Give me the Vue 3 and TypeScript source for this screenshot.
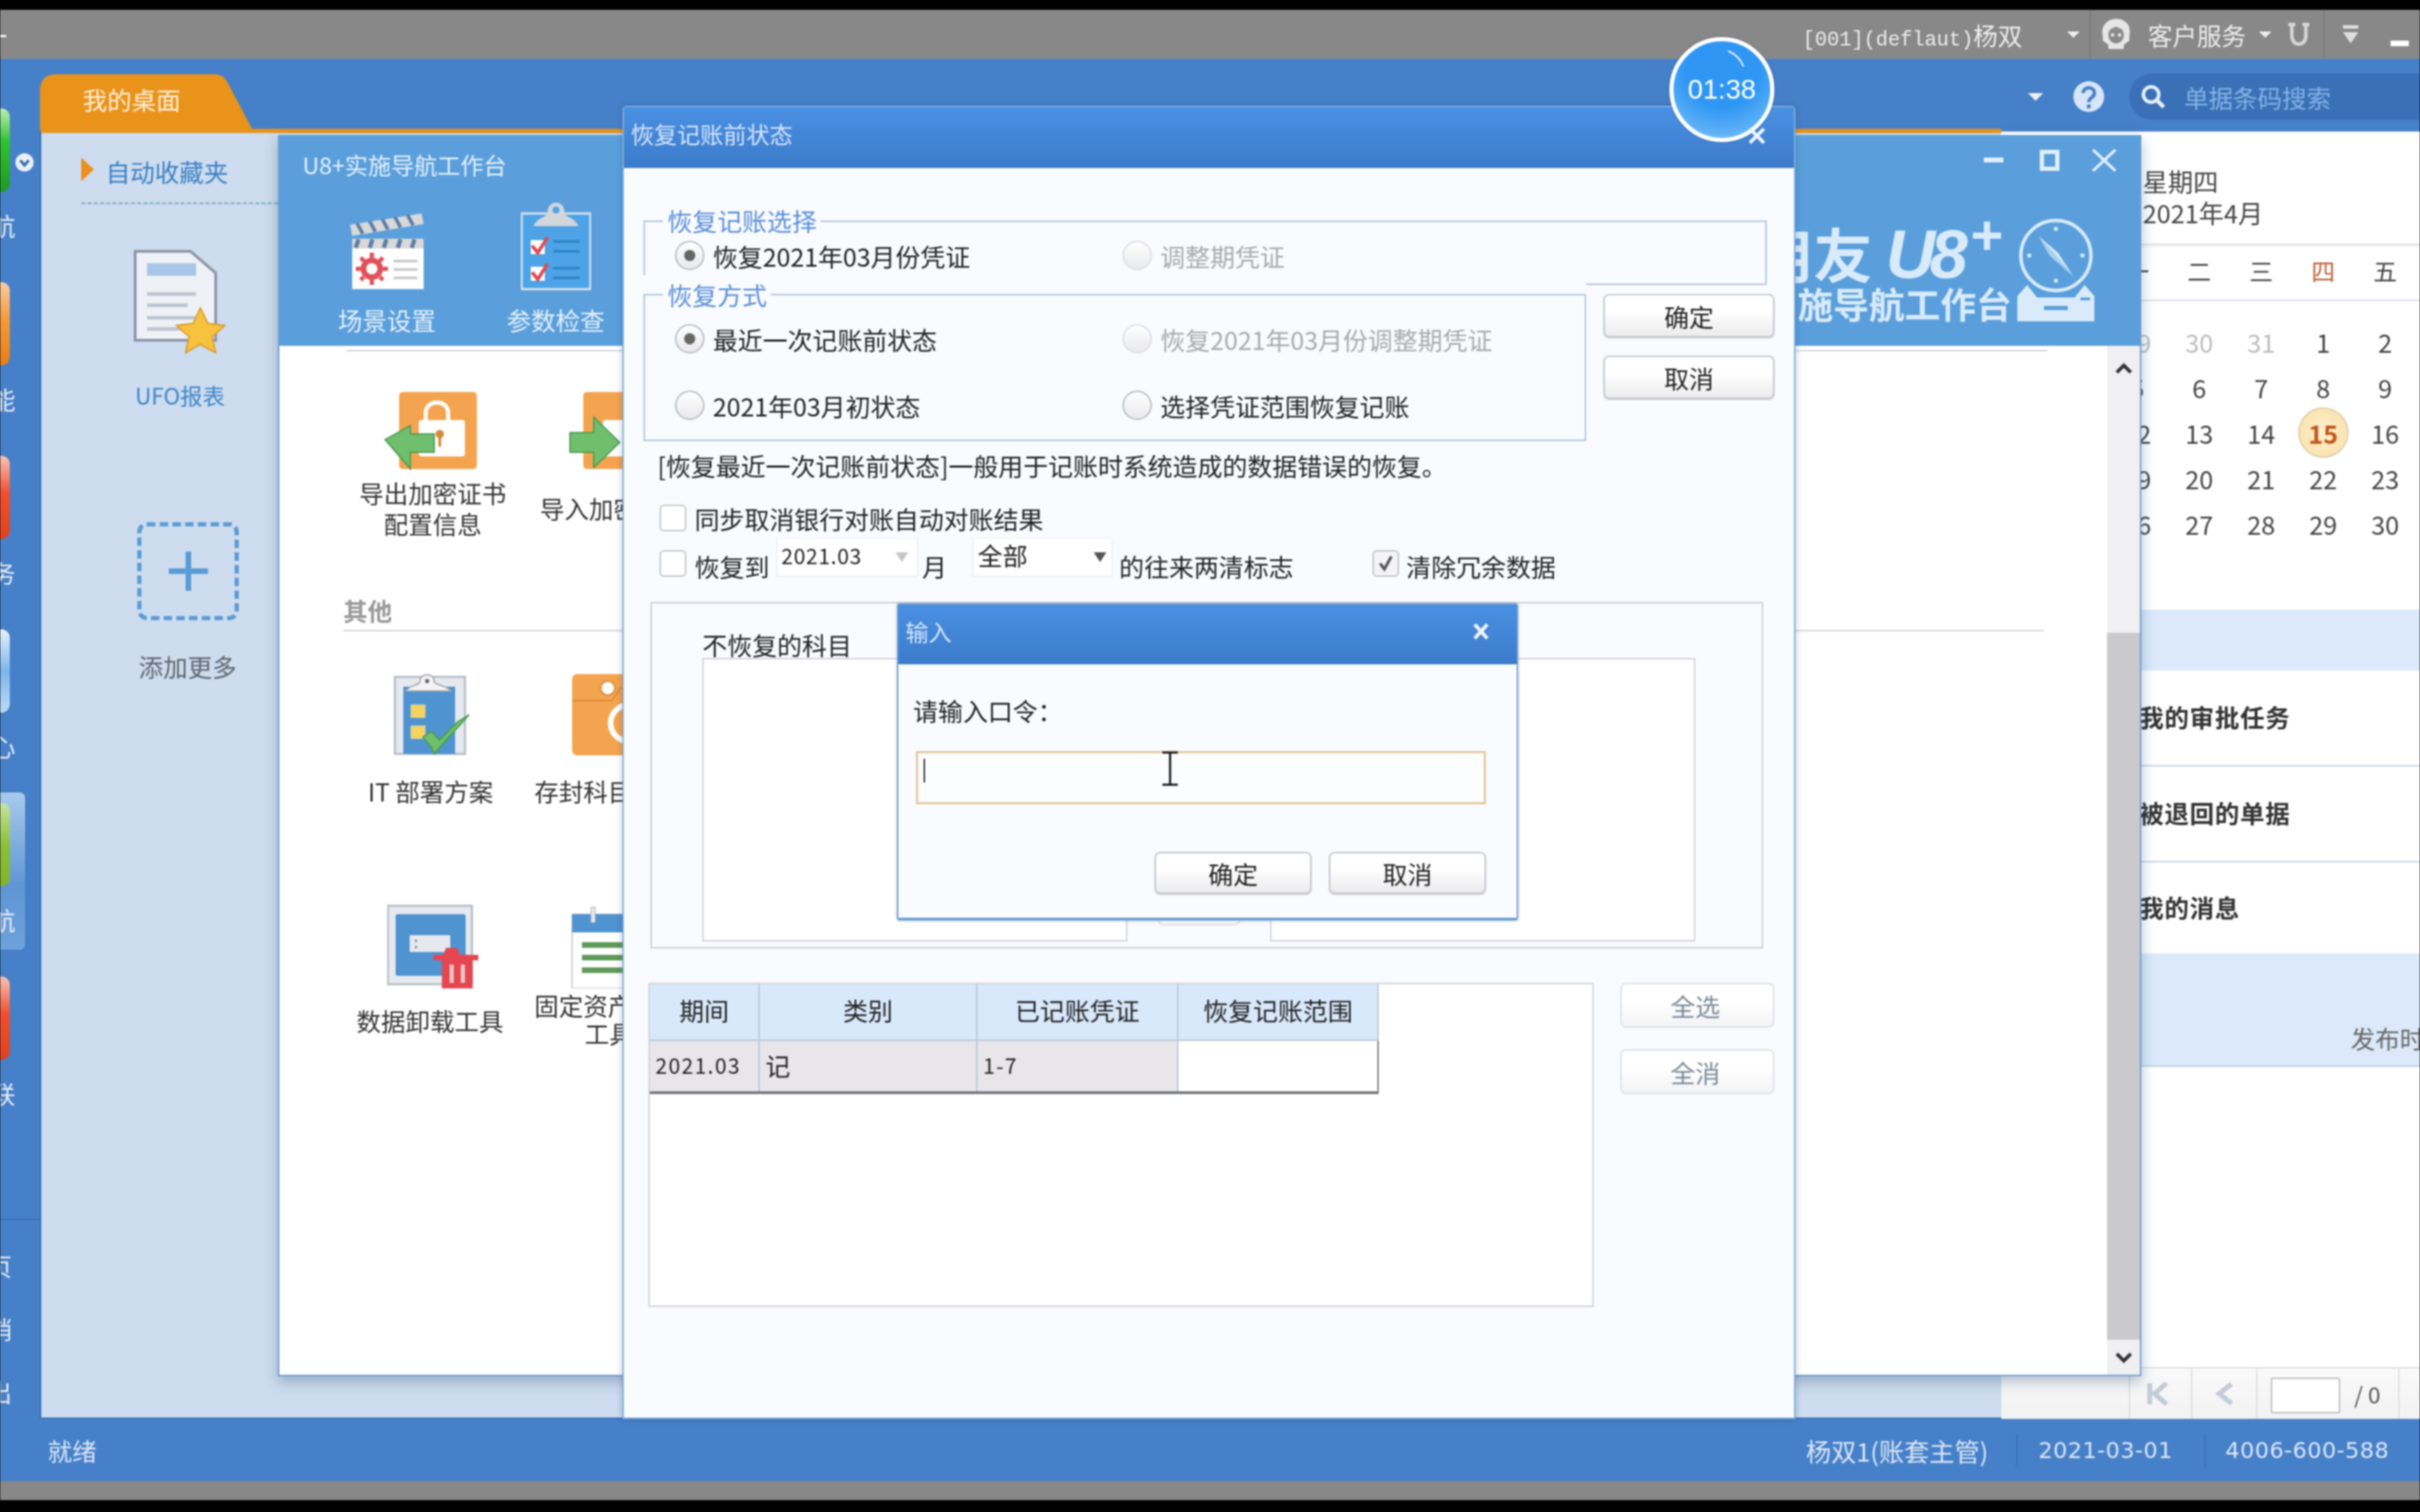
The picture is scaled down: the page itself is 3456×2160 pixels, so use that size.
<script setup lang="ts">
const sideItems = [
  { label: '航', cls: 'green' },
  { label: '能', cls: 'orange' },
  { label: '务', cls: 'red' },
  { label: '心', cls: 'blue' },
  { label: '航', cls: 'lime', active: true },
  { label: '联', cls: 'red' }
]
const sideBottom = ['页', '销', '出']
const weekdays = ['一', '二', '三', '四', '五', '六', '日']
const days: { t: string; muted?: boolean; today?: boolean }[] = [
  { t: '29', muted: true }, { t: '30', muted: true }, { t: '31', muted: true }, { t: '1' }, { t: '2' }, { t: '3' }, { t: '4' },
  { t: '5' }, { t: '6' }, { t: '7' }, { t: '8' }, { t: '9' }, { t: '10' }, { t: '11' },
  { t: '12' }, { t: '13' }, { t: '14' }, { t: '15', today: true }, { t: '16' }, { t: '17' }, { t: '18' },
  { t: '19' }, { t: '20' }, { t: '21' }, { t: '22' }, { t: '23' }, { t: '24' }, { t: '25' },
  { t: '26' }, { t: '27' }, { t: '28' }, { t: '29' }, { t: '30' }, { t: '1' }, { t: '2' }
]
</script>

<template>
  <div class="page">
    <div class="black-top"></div>
    <header class="topbar">
      <span class="plus">+</span>
      <span class="account">[001](deflaut)<b>杨双</b></span>
      <i class="tri tri-a"></i>
      <i class="vsep sep-a"></i>
      <svg class="avatar" width="50" height="46" viewBox="0 0 50 46">
        <path d="M6 26 C2 6 18 1 25 1 C34 1 48 6 44 26 L44 32 L36 38 L36 44 L14 44 L14 38 L6 32 Z" fill="#e6e6e6" />
        <path d="M14 24 C14 14 22 14 25 12 C30 15 36 14 36 24 C36 32 30 36 25 36 C20 36 14 32 14 24 Z" fill="#8a8a8a" />
        <circle cx="20" cy="24" r="2.4" fill="#eee" /><circle cx="30" cy="24" r="2.4" fill="#eee" />
      </svg>
      <span class="service">客户服务</span>
      <i class="tri tri-b"></i>
      <svg class="u-mark" width="38" height="36" viewBox="0 0 38 36"><path d="M4 4 H14 M24 4 H34 M9 4 V20 C9 36 29 36 29 20 V4" fill="none" stroke="#d6d6d6" stroke-width="5" /></svg>
      <i class="vsep sep-b"></i>
      <svg class="down-mark" width="24" height="30" viewBox="0 0 24 30"><path d="M1 2 H23 V7 H1 Z M1 12 H23 L12 28 Z" fill="#dedede" /></svg>
      <svg class="min-mark" width="26" height="8" viewBox="0 0 26 8"><rect width="26" height="8" fill="#fff" /></svg>
    </header>

    <div class="workspace">
      <aside class="sidebar">
        <div v-for="(it, i) in sideItems" :key="i" class="side-item" :class="{ active: it.active }">
          <div class="gloss" :class="it.cls"></div>
          <div class="side-label"><span>{{ it.label }}</span></div>
        </div>
        <div class="side-bottom">
          <div v-for="b in sideBottom" :key="b" class="side-link"><span>{{ b }}</span></div>
        </div>
        <svg class="side-chevron" width="28" height="28" viewBox="0 0 28 28">
          <circle cx="14" cy="14" r="13" fill="#e8f0fa" />
          <path d="M8 11 L14 18 L20 11" fill="none" stroke="#3b6ea8" stroke-width="4" />
        </svg>
      </aside>

      <div class="desk">
        <div class="tabbar">
          <div class="tab">我的桌面</div>
          <div class="tab-tools">
            <i class="tri tri-c"></i>
            <svg class="help" width="46" height="46" viewBox="0 0 46 46">
              <circle cx="23" cy="23" r="22" fill="#d6e6f8" />
              <path d="M15 18 C15 8 31 8 31 18 C31 25 23 24 23 31" fill="none" stroke="#4a82c4" stroke-width="5" />
              <circle cx="23" cy="37" r="3" fill="#4a82c4" />
            </svg>
            <div class="search">
              <svg width="40" height="40" viewBox="0 0 40 40">
                <circle cx="17" cy="17" r="11" fill="none" stroke="#e6f0fb" stroke-width="5" />
                <path d="M25 25 L35 35" stroke="#e6f0fb" stroke-width="6" />
              </svg>
              <span>单据条码搜索</span>
            </div>
          </div>
        </div>

        <div class="desk-body">
          <section class="fav">
            <div class="fav-head">
              <svg width="18" height="34" viewBox="0 0 18 34"><path d="M0 0 L18 17 L0 34 Z" fill="#ee8f1c" /></svg>
              <span>自动收藏夹</span>
            </div>
            <div class="fav-rule"></div>
            <svg class="ufo-icon" width="132" height="150" viewBox="0 0 132 150">
              <path d="M3 3 H82 L118 34 V130 H3 Z" fill="#eef1f6" stroke="#8e96a8" stroke-width="4" />
              <rect x="20" y="20" width="70" height="18" fill="#a8c6e8" />
              <path d="M20 64 H90 M20 80 H78 M20 98 H90 M20 114 H70" stroke="#bcc3cf" stroke-width="5" />
              <path d="M96 84 L107 106 L131 109 L113 125 L118 148 L96 136 L75 148 L80 125 L62 109 L86 106 Z" fill="#f7c33f" stroke="#d99a2a" stroke-width="2" />
            </svg>
            <div class="ufo-label">UFO报表</div>
            <div class="add-box">
              <svg width="62" height="62" viewBox="0 0 62 62"><path d="M31 3 V59 M3 31 H59" stroke="#5b9bd5" stroke-width="8" /></svg>
            </div>
            <div class="add-label">添加更多</div>
          </section>

          <section class="right-panel">
            <div class="cal-head">
              <div>星期四</div>
              <div>2021年4月</div>
            </div>
            <div class="week-row">
              <span v-for="w in weekdays" :key="w" :class="{ thu: w === '四' }">{{ w }}</span>
            </div>
            <div class="date-grid">
              <span v-for="(d, i) in days" :key="i" :class="{ muted: d.muted, today: d.today }">{{ d.t }}</span>
            </div>
            <div class="band band-a"></div>
            <div class="msg-row line">我的审批任务</div>
            <div class="msg-row line">被退回的单据</div>
            <div class="msg-row msg-last">我的消息</div>
            <div class="band band-b"><span>发布时间</span></div>
            <div class="pager">
              <div class="pg-cell pg-first">
                <svg width="40" height="34" viewBox="0 0 40 34"><path d="M4 2 V32 M28 2 L11 17 L28 32" fill="none" stroke="#c3ccd8" stroke-width="7" /></svg>
              </div>
              <div class="pg-cell pg-prev">
                <svg width="28" height="34" viewBox="0 0 28 34"><path d="M24 3 L6 17 L24 31" fill="none" stroke="#c3ccd8" stroke-width="7" /></svg>
              </div>
              <div class="pg-cell pg-input"><i></i><span>/ 0</span></div>
              <div class="pg-cell pg-end"></div>
            </div>
          </section>
        </div>
      </div>
    </div>

    <footer class="status">
      <span class="ready">就绪</span>
      <span class="st st-user">杨双1(账套主管)</span><i class="st-sep"></i>
      <span class="st st-date">2021-03-01</span><i class="st-sep"></i>
      <span class="st st-tel">4006-600-588</span>
    </footer>
    <div class="gray-bottom"></div>
    <div class="black-bottom"></div>

    <!-- U8+ window -->
    <div class="u8win">
      <div class="u8-head">
        <div class="u8-head-left">
          <div class="u8-title">U8+实施导航工作台</div>
          <div class="u8-tools">
            <div class="u8-tool">
              <div class="u8-tool-icon">
                <svg width="106" height="110" viewBox="0 0 106 110">
                  <path d="M0 16 L102 0 L105 15 L3 32 Z" fill="#d9d9d9" />
                  <path d="M10 14 L18 29 M28 11 L36 26 M46 8 L54 23 M64 5 L72 20 M82 2 L90 17" stroke="#5c7fa8" stroke-width="5" />
                  <rect x="3" y="36" width="102" height="14" fill="#d9d9d9" />
                  <path d="M12 37 L8 49 M32 37 L28 49 M52 37 L48 49 M72 37 L68 49 M92 37 L88 49" stroke="#5c7fa8" stroke-width="6" />
                  <rect x="3" y="50" width="102" height="58" fill="#fff" />
                  <circle cx="31" cy="79" r="12" fill="none" stroke="#e0505a" stroke-width="8" />
                  <path d="M31 56 V102 M8 79 H54 M15 63 L47 95 M47 63 L15 95" stroke="#e0505a" stroke-width="6" stroke-dasharray="7 32" stroke-dashoffset="0" />
                  <path d="M62 68 H96 M62 80 H96 M62 92 H96" stroke="#ccc" stroke-width="4" />
                </svg>
              </div>
              <div class="u8-tool-label">场景设置</div>
            </div>
            <div class="u8-tool">
              <div class="u8-tool-icon">
                <svg width="100" height="128" viewBox="0 0 100 128">
                  <rect x="1" y="18" width="98" height="108" fill="#4da3e6" stroke="#dfe7ee" stroke-width="3" />
                  <path d="M18 36 C24 22 38 24 38 16 C38 -2 62 -2 62 16 C62 24 76 22 82 36 Z" fill="#d3d6da" />
                  <circle cx="50" cy="13" r="5" fill="#4da3e6" />
                  <rect x="14" y="56" width="20" height="20" fill="#fff" /><rect x="14" y="94" width="20" height="20" fill="#fff" />
                  <path d="M16 64 L24 74 L38 52 M16 102 L24 112 L38 90" fill="none" stroke="#e04a50" stroke-width="5" />
                  <path d="M46 58 H84 M46 72 H84 M46 96 H84 M46 110 H84" stroke="#2f86c8" stroke-width="4" />
                </svg>
              </div>
              <div class="u8-tool-label">参数检查</div>
            </div>
          </div>
        </div>
        <div class="u8-head-right">
          <div class="win-ctrls">
            <svg width="28" height="8" viewBox="0 0 28 8" class="c-min"><rect width="28" height="7" fill="#e2effb" /></svg>
            <svg width="28" height="30" viewBox="0 0 28 30" class="c-max"><rect x="3" y="3" width="22" height="24" fill="none" stroke="#e2effb" stroke-width="6" /></svg>
            <svg width="36" height="34" viewBox="0 0 36 34" class="c-close"><path d="M2 2 L34 32 M34 2 L2 32" stroke="#e2effb" stroke-width="4" /></svg>
          </div>
          <div class="brand">
            <div class="brand-text">
              <div class="brand-line1">用友 <b>U8</b><sup>+</sup></div>
              <div class="brand-line2">实施导航工作台</div>
            </div>
            <svg width="116" height="160" viewBox="0 0 116 160">
              <circle cx="57" cy="64" r="50" fill="none" stroke="#d9ebfb" stroke-width="5" />
              <circle cx="57" cy="26" r="3" fill="#d9ebfb" /><circle cx="57" cy="100" r="3" fill="#d9ebfb" />
              <circle cx="19" cy="64" r="3" fill="#d9ebfb" /><circle cx="95" cy="64" r="3" fill="#d9ebfb" />
              <path d="M32 36 L52 58 L62 70 L82 94 L60 60 Z" fill="#d9ebfb" />
              <path d="M32 36 L48 64 L82 94 L52 58 Z" fill="#a9d0f0" />
              <path d="M2 158 V122 L16 106 L30 124 H84 L98 106 L112 122 V158 Z" fill="#d9ebfb" />
              <rect x="40" y="136" width="34" height="6" fill="#5a9fdc" />
              <rect x="92" y="124" width="14" height="4" fill="#5a9fdc" />
            </svg>
          </div>
        </div>
      </div>
      <div class="u8-body">
        <div class="u8-main">
          <div class="rule rule-top"></div>
          <div class="tool-row row-1">
            <div class="tool">
              <svg width="140" height="120" viewBox="0 0 140 120">
                <rect x="22" y="4" width="111" height="110" rx="5" fill="#f4a34e" />
                <path d="M60 46 V34 C60 14 92 14 92 34 V46" fill="none" stroke="#fff" stroke-width="6" />
                <rect x="50" y="44" width="66" height="52" rx="4" fill="#fff" />
                <circle cx="80" cy="64" r="6" fill="#d98a36" /><rect x="78" y="64" width="4" height="18" fill="#d98a36" />
                <path d="M2 72 L38 52 V64 L72 64 V90 L38 90 V114 Z" fill="#6fbf6f" stroke="#4c9a50" stroke-width="2" />
              </svg>
              <div class="tool-label">导出加密证书<br />配置信息</div>
            </div>
            <div class="tool tool-cut">
              <svg width="140" height="120" viewBox="0 0 140 120" class="cut-icon">
                <rect x="20" y="4" width="111" height="110" rx="5" fill="#f4a34e" />
                <rect x="48" y="44" width="66" height="52" rx="4" fill="#fff" />
                <path d="M1 62 L35 62 L35 40 L72 76 L35 112 L35 90 L1 90 Z" fill="#6fbf6f" stroke="#4c9a50" stroke-width="2" />
              </svg>
              <div class="tool-label single">导入加密证书</div>
            </div>
          </div>
          <div class="section-title">其他</div>
          <div class="tool-row row-2">
            <div class="tool">
              <svg class="it-icon" width="120" height="120" viewBox="0 0 120 120">
                <rect x="10" y="6" width="100" height="110" fill="#e6e9ef" stroke="#b7bcc6" stroke-width="3" />
                <rect x="22" y="20" width="74" height="96" fill="#4f93d1" />
                <path d="M26 26 C30 18 46 18 46 12 C46 0 66 0 66 12 C66 18 84 18 90 26 Z" fill="#f4f4f4" stroke="#aaa" stroke-width="2" />
                <circle cx="56" cy="12" r="3" fill="#666" />
                <rect x="33" y="46" width="20" height="18" fill="#f6d35a" stroke="#ddb" stroke-width="1" />
                <rect x="33" y="76" width="20" height="18" fill="#f6d35a" stroke="#ddb" stroke-width="1" />
                <path d="M50 92 L62 106 L66 116 L76 104 L116 60 L100 70 L74 96 L62 84 Z" fill="#6fc06a" stroke="#4f9c50" stroke-width="2" />
              </svg>
              <div class="tool-label one it-label">IT 部署方案</div>
            </div>
            <div class="tool tool-cut">
              <svg width="130" height="120" viewBox="0 0 130 120" class="cut-icon">
                <rect x="11" y="2" width="115" height="116" rx="7" fill="#f4a34e" />
                <path d="M11 40 H68 L80 22 H126" fill="none" stroke="#d98a36" stroke-width="2" />
                <circle cx="62" cy="22" r="10" fill="#fff" stroke="#d98a36" stroke-width="2" />
                <circle cx="92" cy="72" r="26" fill="none" stroke="#fff" stroke-width="8" />
              </svg>
              <div class="tool-label one cut-label">存封科目</div>
            </div>
          </div>
          <div class="tool-row row-3">
            <div class="tool">
              <svg width="130" height="120" viewBox="0 0 130 120">
                <rect x="1" y="2" width="120" height="112" fill="#e6e9ef" stroke="#b7bcc6" stroke-width="3" />
                <rect x="12" y="14" width="100" height="88" rx="3" fill="#4f93d1" />
                <rect x="32" y="44" width="58" height="24" fill="#e6e9ef" />
                <circle cx="41" cy="52" r="2" fill="#999" /><circle cx="41" cy="61" r="2" fill="#999" />
                <path d="M66 72 H80 L84 62 H100 L104 72 H130 V80 H122 V120 H78 V80 H66 Z" fill="#e44750" />
                <path d="M92 86 V112 M108 86 V112" stroke="#f3c3c6" stroke-width="6" />
              </svg>
              <div class="tool-label row3-label">数据卸载工具</div>
            </div>
            <div class="tool tool-cut">
              <svg width="130" height="120" viewBox="0 0 130 120" class="cut-icon">
                <rect x="11" y="14" width="116" height="106" fill="#fff" stroke="#c8ccd2" stroke-width="2" />
                <rect x="11" y="14" width="116" height="26" fill="#4f93d1" />
                <rect x="38" y="4" width="6" height="22" fill="#e6e9ef" stroke="#aaa" stroke-width="1" />
                <path d="M25 58 H127 M25 76 H127 M25 94 H127" stroke="#5f9a5a" stroke-width="8" />
              </svg>
              <div class="tool-label two-cut">固定资产<br /><em>工具</em></div>
            </div>
          </div>
        </div>
        <div class="u8-scroll">
          <svg class="sb-up" width="24" height="16" viewBox="0 0 24 16"><path d="M2 14 L12 4 L22 14" fill="none" stroke="#333" stroke-width="5" /></svg>
          <div class="sb-thumb"></div>
          <svg class="sb-down" width="24" height="16" viewBox="0 0 24 16"><path d="M2 2 L12 12 L22 2" fill="none" stroke="#333" stroke-width="5" /></svg>
        </div>
      </div>
    </div>

    <!-- main dialog -->
    <div class="dialog">
      <div class="dlg-title">恢复记账前状态</div>
      <div class="dlg-body">
        <div class="group group-a">
          <span class="legend">恢复记账选择</span>
          <div class="radio-grid">
            <label class="radio on"><i></i>恢复2021年03月份凭证</label>
            <label class="radio off"><i></i>调整期凭证</label>
          </div>
        </div>
        <div class="row-method">
          <div class="method-wrap">
            <div class="group group-b">
              <span class="legend">恢复方式</span>
              <div class="radio-grid two">
                <label class="radio on"><i></i>最近一次记账前状态</label>
                <label class="radio off"><i></i>恢复2021年03月份调整期凭证</label>
                <label class="radio"><i></i>2021年03月初状态</label>
                <label class="radio"><i></i>选择凭证范围恢复记账</label>
              </div>
            </div>
          </div>
          <div class="side-btns">
            <button class="btn">确定</button>
            <button class="btn">取消</button>
          </div>
        </div>
        <p class="desc">[恢复最近一次记账前状态]一般用于记账时系统造成的数据错误的恢复。</p>
        <div class="check-line first"><i class="cb"></i><span>同步取消银行对账自动对账结果</span></div>
        <div class="check-line second">
          <i class="cb"></i><span>恢复到</span>
          <div class="field f-month">2021.03<i class="mini-tri pale"></i></div>
          <span class="m-label">月</span>
          <div class="field f-all">全部<i class="mini-tri"></i></div>
          <span class="after-all">的往来两清标志</span>
          <i class="cb checked">
            <svg width="24" height="26" viewBox="0 0 24 26"><path d="M4 13 L10 21 L20 3" fill="none" stroke="#555" stroke-width="4" /></svg>
          </i>
          <span class="clean">清除冗余数据</span>
        </div>
        <div class="subject-box">
          <div class="subject-label">不恢复的科目</div>
          <div class="subject-lists">
            <div class="list"></div>
            <div class="mid-btn-col"><div class="mid-btn"></div></div>
            <div class="list"></div>
          </div>
        </div>
        <div class="table-row">
          <div class="table-box">
            <table>
              <thead>
                <tr><th class="c1">期间</th><th class="c2">类别</th><th class="c3">已记账凭证</th><th class="c4">恢复记账范围</th></tr>
              </thead>
              <tbody>
                <tr><td class="num">2021.03</td><td>记</td><td class="num">1-7</td><td class="blank"></td></tr>
              </tbody>
            </table>
          </div>
          <div class="table-btns">
            <button class="btn dim">全选</button>
            <button class="btn dim">全消</button>
          </div>
        </div>
      </div>
    </div>

    <!-- password dialog -->
    <div class="pwd">
      <div class="pwd-title">
        <span>输入</span>
        <svg width="24" height="26" viewBox="0 0 24 26"><path d="M3 3 L21 23 M21 3 L3 23" stroke="#eef5fd" stroke-width="5" /></svg>
      </div>
      <div class="pwd-body">
        <div class="pwd-label">请输入口令：</div>
        <div class="pwd-input">
          <i class="caret"></i>
          <svg class="ibeam" width="28" height="50" viewBox="0 0 28 50"><path d="M3 2 H25 M14 2 V48 M3 48 H25" fill="none" stroke="#111" stroke-width="3" /></svg>
        </div>
        <div class="pwd-btns">
          <button class="btn">确定</button>
          <button class="btn">取消</button>
        </div>
      </div>
    </div>

    <!-- recording timer -->
    <div class="timer">
      <svg width="40" height="40" viewBox="0 0 40 40"><path d="M4 4 C14 8 22 16 26 26" fill="none" stroke="#fff" stroke-width="2" /></svg>
      <span>01:38</span>
    </div>
    <svg class="dlg-x" width="28" height="28" viewBox="0 0 28 28"><path d="M4 4 L24 24 M24 4 L4 24" stroke="#eef5fd" stroke-width="5" /></svg>
  </div>
</template>

<style>
html, body { margin: 0; background: #000; overflow: hidden; }
</style>

<style scoped>
* { box-sizing: border-box; }
.page {
  position: relative; width: 3456px; height: 2160px; overflow: hidden; display: flex; flex-direction: column;
  background: #000; color: #222; font-family: "Noto Sans CJK SC", "Liberation Sans", sans-serif; font-size: 35px;
  filter: blur(1px);
}
.black-top { height: 14px; background: #000; flex: none; }
.topbar { height: 70px; flex: none; background: #888; display: flex; align-items: center; color: #eee; position: relative; }
.plus { margin-left: -14px; font-size: 44px; line-height: 1; color: #fff; }
.account { margin-left: 2564px; font-family: "Liberation Mono", "Noto Sans CJK SC", monospace; font-size: 29px; width: 378px; white-space: nowrap; flex: none; }
.account b { font-family: "Noto Sans CJK SC", sans-serif; font-size: 35px; font-weight: 400; }
.tri { display: block; width: 0; height: 0; border-left: 9px solid transparent; border-right: 9px solid transparent; border-top: 9px solid #eee; flex: none; }
.vsep { display: block; width: 2px; height: 70px; background: #7a7a7a; flex: none; }
.sep-a { margin-left: 14px; }
.avatar { margin-left: 11px; flex: none; }
.service { margin-left: 20px; width: 142px; white-space: nowrap; flex: none; }
.tri-b { margin-left: 17px; }
.u-mark { margin-left: 20px; flex: none; }
.sep-b { margin-left: 16px; }
.down-mark { margin-left: 25px; flex: none; }
.min-mark { display: block; margin-left: 45px; margin-top: 26px; flex: none; }

.workspace { height: 1943px; flex: none; background: #4680c8; display: flex; }
.sidebar { width: 57px; flex: none; position: relative; padding-top: 56px; overflow: hidden; }
.side-item { width: 36px; height: 225px; padding-top: 15px; margin-bottom: 23px; border-radius: 0 8px 8px 0; }
.side-item.active { background: linear-gradient(#a9cbec, #5f95d5 60%, #6ea2dc); box-shadow: 0 0 3px #3a6eb0; }
.gloss { width: 14px; height: 119px; border-radius: 0 12px 12px 0; }
.gloss.green { background: linear-gradient(#bfeeb8, #2fc034 40%, #1f9a25); }
.gloss.orange { background: linear-gradient(#f8cda6, #f39a3c 45%, #e67f18); }
.gloss.red { background: linear-gradient(#f9c4b8, #ef4f30 45%, #e0421f); }
.gloss.blue { background: linear-gradient(#e6f2fd, #7db6ec 50%, #bcdcf6); }
.gloss.lime { background: linear-gradient(#c8e4a0, #8cc03a 50%, #7eb52a); }
.side-label { margin-top: 28px; width: 22px; height: 40px; overflow: hidden; display: flex; justify-content: flex-end; color: #e6eef9; line-height: 40px; white-space: nowrap; }
.side-label span, .side-link span { flex: none; }
.side-bottom { margin-top: 136px; border-top: 2px solid #3a70b5; padding-top: 19px; }
.side-link { width: 17px; height: 90px; overflow: hidden; display: flex; justify-content: flex-end; align-items: center; color: #e6eef9; white-space: nowrap; }
.side-chevron { position: absolute; left: 21px; top: 134px; }

.desk { flex: 1; min-width: 0; display: flex; flex-direction: column; }
.tabbar { height: 100px; flex: none; display: flex; justify-content: space-between; align-items: flex-end; overflow: hidden; }
.tab { width: 303px; height: 78px; background: #e9931a; color: #fdf0dc; clip-path: path('M0 78 V24 Q0 0 24 0 H250 Q262 0 268 12 L303 78 Z'); padding-left: 61px; line-height: 72px; flex: none; }
.tab-tools { width: 630px; height: 100px; display: flex; align-items: center; padding-top: 8px; flex: none; }
.tri-c { border-left-width: 11px; border-right-width: 11px; border-top-width: 11px; margin-left: 70px; }
.help { margin-left: 42px; flex: none; }
.search { margin-left: 35px; width: 500px; height: 66px; flex: none; border-radius: 32px; background: #3a70b6; display: flex; align-items: center; padding-left: 14px; color: #82b3e6; gap: 24px; white-space: nowrap; }
.desk-body { flex: 1; min-height: 0; display: flex; }
.fav { width: 2801px; flex: none; background: #cddcee; border-top: 6px solid #e9931a; border-left: 2px solid #3a70b5; border-bottom: 2px solid #3a70b5; }
.fav-head { display: flex; align-items: center; gap: 17px; padding: 35px 0 0 57px; color: #3a80c4; }
.fav-head span { line-height: 40px; }
.fav-head svg { margin-top: -6px; }
.fav-rule { margin: 24px 0 0 57px; width: 281px; border-top: 3px dashed #8fb4d8; }
.ufo-icon { display: block; margin: 64px 0 0 131px; }
.ufo-label { margin: 36px 0 0 134px; font-size: 32px; color: #3e85c8; line-height: 44px; }
.add-box { margin: 160px 0 0 137px; width: 145px; height: 140px; border: 6px dashed #5b9bd5; border-radius: 14px; display: flex; align-items: center; justify-content: center; }
.add-label { margin: 44px 0 0 139px; color: #5e6670; line-height: 44px; }

.right-panel { width: 598px; flex: none; margin-top: 4px; background: #fff; display: flex; flex-direction: column; position: relative; }
.cal-head { padding: 48px 0 0 202px; height: 162px; font-size: 36px; line-height: 45px; color: #444; border-bottom: 2px solid #ddd; box-shadow: 0 2px 4px #eee; }
.week-row { display: grid; grid-template-columns: repeat(7, 88.5px); padding: 0 0 6px 150px; height: 80px; align-items: center; justify-items: center; border-bottom: 2px solid #d6dae2; width: 100%; white-space: nowrap; color: #444; font-size: 34px; }
.week-row .thu { color: #c2603a; }
.date-grid { display: grid; grid-template-columns: repeat(7, 88.5px); grid-auto-rows: 65px; padding: 25px 0 0 150px; align-items: center; justify-items: center; font-size: 36px; color: #444; height: 441px; flex: none; }
.date-grid span { width: 72px; height: 72px; line-height: 72px; text-align: center; border-radius: 50%; }
.date-grid .muted { color: #bdbdbd; }
.date-grid .today { background: radial-gradient(#fff2cf, #f8dda4); border: 2px solid #ddccaa; color: #c2561c; font-weight: 700; line-height: 68px; }
.band { background: #dbe9fb; flex: none; }
.band-a { height: 87px; }
.band-b { height: 162px; display: flex; align-items: flex-end; padding: 0 0 14px 499px; border-bottom: 2px solid #b9cfe6; color: #666; white-space: nowrap; }
.msg-row { padding: 0 0 4px 197px; font-weight: 700; letter-spacing: 1px; color: #333; display: flex; align-items: center; flex: none; }
.msg-row.line { height: 137px; border-bottom: 2px solid #c4d2e2; }
.msg-last { height: 130px; }
.pager { margin-top: auto; height: 74px; flex: none; border-top: 2px solid #ddd; background: linear-gradient(#fafafa, #f2f2f2); display: flex; padding-left: 182px; }
.pg-cell { border-left: 2px solid #ddd; display: flex; align-items: center; justify-content: center; flex: none; }
.pg-first { width: 89px; }
.pg-prev { width: 93px; }
.pg-input { width: 203px; justify-content: flex-start; padding-left: 19px; gap: 20px; color: #555; font-size: 32px; }
.pg-input i { display: block; width: 99px; height: 51px; margin-top: 5px; background: #fff; border: 2px solid #b8bcc2; border-radius: 3px; }
.pg-end { width: 31px; }

.status { height: 89px; flex: none; background: #4680c8; display: flex; align-items: center; padding-left: 68px; color: #dbe7f7; }
.ready { margin-right: auto; }
.st { font-family: "DejaVu Sans", "Noto Sans CJK SC", sans-serif; font-size: 32px; white-space: nowrap; letter-spacing: 0.6px; flex: none; }
.st-user { font-family: "Noto Sans CJK SC", sans-serif; font-size: 36px; width: 257px; letter-spacing: 0; }
.st-sep { display: block; width: 2px; height: 48px; background: #3c72b8; flex: none; }
.st-user + .st-sep { margin-left: 43px; }
.st-date { margin-left: 30px; width: 192px; }
.st-date + .st-sep { margin-left: 45px; }
.st-tel { margin: 0 41px 0 28px; width: 237px; }
.gray-bottom { height: 27px; flex: none; background: #888; }
.black-bottom { flex: 1; background: #000; }

.u8win { position: absolute; left: 397px; top: 193px; width: 2661px; height: 1773px; background: #fff; border: 2px solid #6d9bd0; border-top: 0; box-shadow: 0 8px 18px rgba(50, 80, 120, 0.35); display: flex; flex-direction: column; }
.u8-head { height: 301px; flex: none; background: #5a9fdc; color: #e6f1fb; display: flex; justify-content: space-between; }
.u8-title { padding: 20px 0 0 33px; height: 92px; font-size: 33px; line-height: 44px; }
.u8-tools { display: flex; padding-left: 33px; }
.u8-tool { width: 241px; display: flex; flex-direction: column; align-items: center; }
.u8-tool-icon { height: 130px; display: flex; align-items: flex-end; }
.u8-tool-label { margin-top: 20px; line-height: 44px; }
.u8-head-right { width: 820px; display: flex; flex-direction: column; align-items: flex-end; }
.win-ctrls { display: flex; align-items: center; height: 72px; padding-right: 33px; gap: 52px; }
.c-close { margin-left: -6px; }
.brand { display: flex; align-items: flex-end; padding-right: 61px; margin-top: 36px; color: #d9ebfb; }
.brand-text { text-align: right; margin-right: 6px; }
.brand-line1 { font-size: 84px; line-height: 84px; font-weight: 700; white-space: nowrap; padding-right: 12px; }
.brand-line1 b { font-family: "Liberation Sans", sans-serif; font-style: italic; font-size: 98px; letter-spacing: -8px; }
.brand-line1 sup { font-family: "Liberation Sans", sans-serif; font-size: 80px; line-height: 0; vertical-align: 34px; margin-left: 12px; }
.brand-line2 { font-size: 51px; line-height: 56px; font-weight: 700; white-space: nowrap; }
.u8-body { flex: 1; min-height: 0; display: flex; }
.u8-main { flex: 1; min-width: 0; padding-top: 6px; }
.rule { height: 2px; background: #d0d3da; margin-left: 96px; width: 2429px; }
.tool-row { display: grid; grid-template-columns: 240px 240px; margin-left: 99px; }
.tool { display: flex; flex-direction: column; align-items: center; color: #333; }
.tool svg { display: block; flex: none; }
.tool-cut { align-items: flex-start; padding-left: 25px; }
.tool-cut .cut-icon { margin-left: 43px; }
.row-1 .tool-cut .cut-icon { margin-left: 50px; }
.tool-label { text-align: center; line-height: 44px; white-space: nowrap; }
.row-1 { padding-top: 54px; }
.row-1 .tool-label { margin-top: 6px; }
.row-1 .single { margin-top: 28px; margin-left: 8px; }
.section-title { margin: 80px 0 0 91px; padding: 0 0 6px 0; line-height: 44px; font-weight: 700; color: #999; border-bottom: 2px solid #d0d3da; width: 2429px; }
.row-2 { padding-top: 59px; }
.row-2 .tool-label { margin-top: 27px; }
.it-icon { margin-left: -8px; }
.it-label { margin-left: -6px; }
.row-3 { padding-top: 140px; }
.row3-label { margin: 24px 0 0 -8px; }
.two-cut { margin-top: 4px; line-height: 40px; text-align: left; }
.two-cut em { font-style: normal; margin-left: 72px; }
.u8-scroll { width: 47px; flex: none; background: #f0eff1; display: flex; flex-direction: column; align-items: center; }
.sb-up { margin-top: 24px; margin-bottom: 370px; flex: none; }
.sb-thumb { width: 100%; height: 1010px; background: #cacacd; flex: none; }
.sb-down { margin-top: 18px; flex: none; }

.dialog { position: absolute; left: 889px; top: 151px; width: 1675px; height: 1876px; background: #fafbff; border: 2px solid #7fb0e0; border-radius: 6px 6px 0 0; box-shadow: 0 0 10px rgba(40, 70, 110, 0.35); font-size: 35.6px; }
.dlg-title { height: 87px; background: linear-gradient(#4a90e3, #3c7bca); color: #d6e6fa; font-size: 33px; line-height: 77px; padding-left: 10px; }
.dlg-body { padding: 75px 0 0 28px; }
.group { position: relative; border: 2px solid #a9c0dd; }
.group-a { width: 1604px; height: 92px; padding: 23px 0 0 43px; }
.legend { position: absolute; left: 26px; height: 44px; padding: 0 6px; line-height: 44px; background: #fafbff; color: #5b8fd8; white-space: nowrap; }
.group-a .legend { top: -24px; }
.group-b .legend { top: -23px; }
.radio-grid { display: grid; grid-template-columns: 639px 637px; }
.radio-grid.two { row-gap: 45px; }
.radio { display: flex; align-items: center; gap: 12px; height: 50px; white-space: nowrap; color: #222; }
.radio i { display: block; position: relative; width: 42px; height: 42px; border-radius: 50%; border: 2px solid #b5b8bd; background: linear-gradient(#fff, #e9e9ec); flex: none; }
.radio.on i::after { content: ''; position: absolute; left: 11px; top: 11px; width: 16px; height: 16px; border-radius: 50%; background: #666; }
.radio.off { color: #aaa; }
.radio.off i { border-color: #dcdde0; }
.row-method { display: flex; margin-top: -14px; position: relative; }
.method-wrap { width: 1346px; height: 237px; background: #fafbff; padding-top: 27px; flex: none; }
.group-b { height: 210px; padding: 37px 0 0 43px; }
.side-btns { margin: 27px 0 0 25px; display: flex; flex-direction: column; gap: 26px; }
.btn { display: block; font: inherit; color: #222; padding: 0; border: 2px solid #c4c6ca; border-radius: 8px; background: linear-gradient(#fff 40%, #ececee); box-shadow: 0 1px 2px #bbb; white-space: nowrap; }
.side-btns .btn { width: 244px; height: 62px; }
.desc { margin: 13px 0 0 20px; line-height: 44px; white-space: nowrap; }
.check-line { display: flex; align-items: center; margin-left: 23px; white-space: nowrap; }
.check-line.first { margin-top: 31px; height: 44px; }
.check-line.second { margin-top: 6px; height: 60px; }
.cb { display: block; width: 38px; height: 38px; border: 2px solid #c0c2c6; border-radius: 6px; background: #fff; margin-right: 12px; flex: none; }
.second .cb { margin-top: 14px; }
.second span { margin-top: 20px; }
.field { position: relative; height: 56px; flex: none; background: #fff; border: 1px solid #dfe1e5; border-top-color: #eee; padding-left: 6px; line-height: 48px; margin-top: -4px; }
.f-month { width: 202px; margin-left: 10px; font-size: 30px; letter-spacing: 1px; }
.f-all { width: 200px; margin-left: 37px; }
.m-label { margin-left: 6px; }
.after-all { margin-left: 9px; }
.mini-tri { position: absolute; right: 8px; top: 20px; width: 0; height: 0; border-left: 9px solid transparent; border-right: 9px solid transparent; border-top: 14px solid #555; }
.mini-tri.pale { border-top-color: #c4c6ca; right: 13px; }
.cb.checked { margin-left: 113px; margin-right: 10px; display: flex; align-items: center; justify-content: center; background: #f4f4f6; }
.subject-box { margin: 32px 0 0 10px; width: 1589px; height: 495px; border: 2px solid #c6cdd8; padding: 37px 0 0 72px; background: #fafbff; }
.subject-label { height: 44px; line-height: 44px; }
.subject-lists { display: flex; height: 405px; margin-top: -3px; }
.list { width: 607px; flex: none; background: #fff; border: 2px solid #cfd2d8; }
.mid-btn-col { width: 204px; flex: none; display: flex; align-items: flex-end; padding: 0 0 23px 43px; }
.mid-btn { width: 118px; height: 50px; border: 2px solid #ddd; border-radius: 8px; }
.table-row { display: flex; margin: 49px 0 0 7px; }
.table-box { width: 1350px; height: 463px; border: 2px solid #d2d2d6; background: #fff; flex: none; }
table { border-collapse: collapse; table-layout: fixed; width: 1040px; }
.c1 { width: 156px; } .c2 { width: 311px; } .c3 { width: 287px; } .c4 { width: 286px; }
th { height: 80px; padding: 0 0 6px; background: #d9e9fc; font-weight: 400; border-right: 2px solid #b7c6d8; border-bottom: 2px solid #b7c6d8; color: #222; }
td { height: 75px; padding: 0 0 4px 8px; background: #e8e6e8; border-right: 2px solid #b7c6d8; border-bottom: 4px solid #74767f; color: #222; }
td.num { font-size: 30px; letter-spacing: 2px; }
td.blank { background: #fff; border-right: 2px solid #74767f; }
.table-btns { margin-left: 38px; display: flex; flex-direction: column; gap: 31px; }
.table-btns .btn { width: 220px; height: 64px; padding-right: 6px; }
.btn.dim { color: #7d8a99; border-color: #dcdee2; background: linear-gradient(#fff 40%, #f4f4f6); box-shadow: none; }

.pwd { position: absolute; left: 1281px; top: 862px; width: 887px; height: 453px; background: #fafbff; border: 2px solid #6e9dd2; border-bottom-width: 4px; border-radius: 4px; box-shadow: 0 0 4px rgba(60, 90, 130, 0.4); font-size: 35.6px; }
.pwd-title { height: 85px; background: linear-gradient(#4a90e3, #3c7bca); color: #d6e6fa; font-size: 33px; display: flex; justify-content: space-between; align-items: center; padding: 0 39px 10px 10px; }
.pwd-body { padding: 42px 44px 0 21px; }
.pwd-label { line-height: 48px; }
.pwd-input { position: relative; margin: 34px 0 0 4px; height: 76px; background: #fcfdff; border: 3px solid #e5c59c; }
.caret { position: absolute; left: 8px; top: 8px; width: 2px; height: 34px; background: #222; }
.ibeam { position: absolute; left: 346px; top: -3px; }
.pwd-btns { margin-top: 68px; display: flex; justify-content: flex-end; gap: 25px; }
.pwd-btns .btn { width: 224px; height: 60px; }

.timer { position: absolute; left: 2384px; top: 53px; width: 150px; height: 150px; border-radius: 50%; border: 6px solid #fff; background: radial-gradient(circle at 50% 30%, #2f97f3 45%, #5db0f7 75%, #a3d3fb 100%); color: #fff; font-family: "Liberation Sans", sans-serif; font-size: 39px; display: flex; align-items: center; justify-content: center; box-shadow: 0 0 4px rgba(0, 0, 0, 0.2); }
.timer svg { position: absolute; right: 24px; top: 10px; }
.dlg-x { position: absolute; left: 2495px; top: 180px; }
</style>
